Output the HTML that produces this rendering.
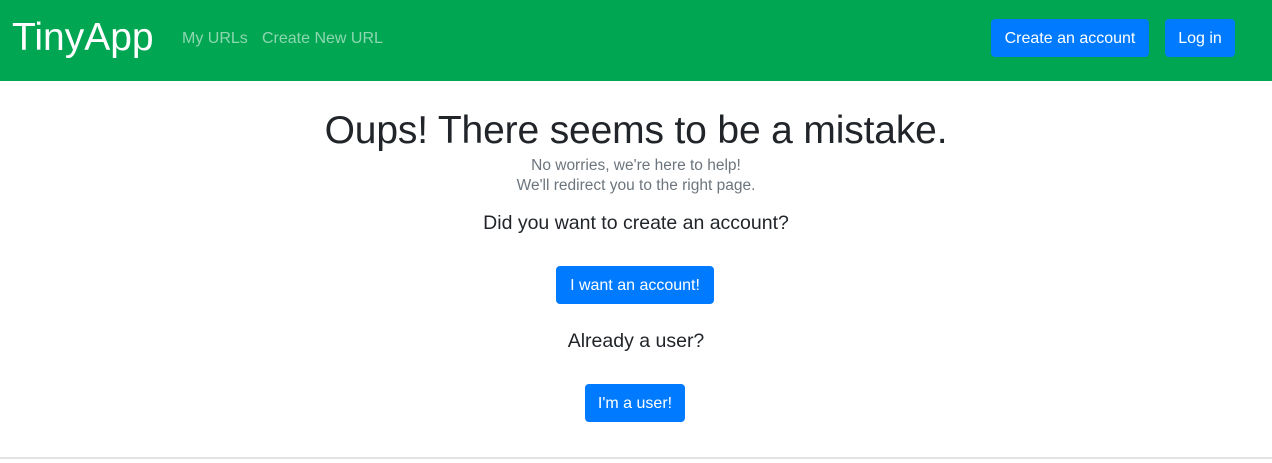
<!DOCTYPE html>
<html><head><style>
*{margin:0;padding:0;box-sizing:border-box}
body{width:1272px;height:463px;font-family:"Liberation Sans",sans-serif;background:#fff;position:relative;overflow:hidden;color:#212529}
.nav{position:absolute;left:0;top:0;width:1272px;height:81px;background:#00a651}
.abs{position:absolute;white-space:nowrap}
.btn{position:absolute;background:#007bff;color:#fff;border-radius:4px;font-size:16px;display:flex;align-items:center;justify-content:center;padding-top:2px}
.c{position:absolute;left:0;width:1272px;text-align:center;white-space:nowrap}
</style></head><body>
<div class="nav">
<div class="abs" style="left:12px;top:15px;font-size:39px;color:#fff;line-height:46px">TinyApp</div>
<div class="abs" style="left:182px;top:29px;font-size:16px;color:rgba(255,255,255,.55);line-height:20px">My URLs</div>
<div class="abs" style="left:262px;top:29px;font-size:16px;color:rgba(255,255,255,.55);line-height:20px">Create New URL</div>
<div class="btn" style="left:991px;top:19px;width:158px;height:38px">Create an account</div>
<div class="btn" style="left:1165px;top:19px;width:70px;height:38px">Log in</div>
</div>
<div class="c" style="top:107px;font-size:39px;line-height:48px;letter-spacing:-0.15px">Oups! There seems to be a mistake.</div>
<div class="c" style="top:156px;font-size:15.5px;line-height:20px;color:#6c757d">No worries, we're here to help!<br>We'll redirect you to the right page.</div>
<div class="c" style="top:211px;font-size:19.5px;line-height:24px">Did you want to create an account?</div>
<div class="btn" style="left:556px;top:266px;width:158px;height:38px">I want an account!</div>
<div class="c" style="top:329px;font-size:19.5px;line-height:24px">Already a user?</div>
<div class="btn" style="left:585px;top:384px;width:100px;height:38px">I'm a user!</div>
<div class="abs" style="left:0;top:457px;width:1272px;height:2px;background:#e3e3e3"></div>
</body></html>
